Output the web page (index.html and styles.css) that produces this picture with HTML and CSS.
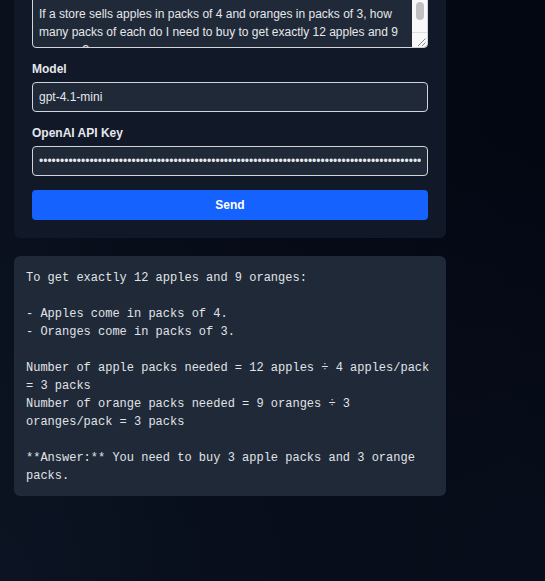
FILE: index.html
```html
<!DOCTYPE html>
<html lang="en">
<head>
<meta charset="utf-8">
<title>Ask</title>
<link rel="stylesheet" href="styles.css">
</head>
<body>
<main class="page">
  <form class="card">
    <div class="field prompt-wrap">
      <textarea class="prompt">If a store sells apples in packs of 4 and oranges in packs of 3, how many packs of each do I need to buy to get exactly 12 apples and 9 oranges?</textarea>
      <div class="sb" aria-hidden="true">
        <div class="sb-track"><div class="sb-thumb"></div></div>
        <div class="sb-corner">
          <svg width="15" height="14" viewBox="0 0 15 14"><path d="M13.5 5.5 L6 13 M13.5 9.5 L10 13" stroke="#8a8a8a" stroke-width="1" fill="none"/></svg>
        </div>
      </div>
    </div>
    <div class="field">
      <label class="label" for="model">Model</label>
      <input class="input" id="model" type="text" value="gpt-4.1-mini">
    </div>
    <div class="field">
      <label class="label" for="key">OpenAI API Key</label>
      <input class="input" id="key" type="password" value="sk-proj-aB3dE5fG7hI9jK1lM3nO5pQ7rS9tU1vW3xY5zA7bC9dE1fG3hI5jK7lM9nO1pQ3rS5tU7vW9xY1zA3bC5dE7fG9hI1jK3lM5nO7pQ9rS1tU3vW5xY7z">
    </div>
    <button class="send" type="button">Send</button>
  </form>
  <pre class="output">To get exactly 12 apples and 9 oranges:

- Apples come in packs of 4.
- Oranges come in packs of 3.

Number of apple packs needed = 12 apples ÷ 4 apples/pack = 3 packs
Number of orange packs needed = 9 oranges ÷ 3 oranges/pack = 3 packs

**Answer:** You need to buy 3 apple packs and 3 orange packs.</pre>
</main>
</body>
</html>
```
FILE: styles.css
```css
html {
  background: #040914;
}
body {
  margin: 0;
  min-height: 100vh;
  background:
    radial-gradient(ellipse at 0% 100%, rgba(12, 20, 36, 0.7) 0%, rgba(4, 9, 20, 0) 60%),
    radial-gradient(ellipse at 100% 100%, rgba(12, 18, 34, 0.6) 0%, rgba(4, 9, 20, 0) 55%),
    linear-gradient(90deg, #0a101c 0%, #060b17 30%, #030712 100%);
  font-family: "Liberation Sans", Arial, sans-serif;
  color: #e5e7eb;
}
.page {
  width: 432px;
  padding: 0 14px;
  margin-top: -22px;
  display: flex;
  flex-direction: column;
  gap: 18px;
}
.card {
  background: #111827;
  border-radius: 6px;
  padding: 18px;
  display: flex;
  flex-direction: column;
  gap: 14px;
  margin: 0;
}
.field {
  display: flex;
  flex-direction: column;
}
.prompt-wrap {
  position: relative;
}
.label {
  font-size: 12px;
  line-height: 15px;
  font-weight: 700;
  color: #e5e7eb;
  margin-bottom: 5px;
}
.prompt {
  box-sizing: border-box;
  width: 100%;
  height: 52px;
  margin: 0;
  padding: 8px 21px 8px 6px;
  background: #1f2937;
  color: #e5e7eb;
  border: 1px solid #d1d5db;
  border-radius: 4px;
  font-family: "Liberation Sans", Arial, sans-serif;
  font-size: 12px;
  line-height: 18px;
  resize: none;
  overflow: hidden;
}
.sb {
  position: absolute;
  top: 1px;
  right: 1px;
  bottom: 1px;
  width: 15px;
  display: flex;
  flex-direction: column;
  background: #f9f9f9;
  border-radius: 0 3px 3px 0;
  overflow: hidden;
}
.sb-track {
  flex: 1;
  display: flex;
  flex-direction: column;
}
.sb-thumb {
  width: 8px;
  height: 18px;
  margin: 5px 3px 0 4px;
  border-radius: 4px;
  background: #c1c1c1;
}
.sb-corner {
  height: 14px;
  border-top: 1px solid #dedede;
  display: flex;
}
.input {
  box-sizing: border-box;
  width: 100%;
  height: 30px;
  margin: 0;
  padding: 0 6px;
  background: #1f2937;
  color: #e5e7eb;
  border: 1px solid #d1d5db;
  border-radius: 4px;
  font-family: "Liberation Sans", Arial, sans-serif;
  font-size: 12px;
}
.send {
  height: 30px;
  border: 0;
  border-radius: 4px;
  background: #1662ff;
  color: #ffffff;
  font-family: "Liberation Sans", Arial, sans-serif;
  font-size: 12px;
  font-weight: 700;
  cursor: pointer;
}
.output {
  margin: 0;
  background: #1f2937;
  border-radius: 6px;
  padding: 13px 12px 11px;
  white-space: pre-wrap;
  font-family: "Liberation Mono", "DejaVu Sans Mono", monospace;
  font-size: 12px;
  line-height: 18px;
  color: #e0e3e8;
}
```
